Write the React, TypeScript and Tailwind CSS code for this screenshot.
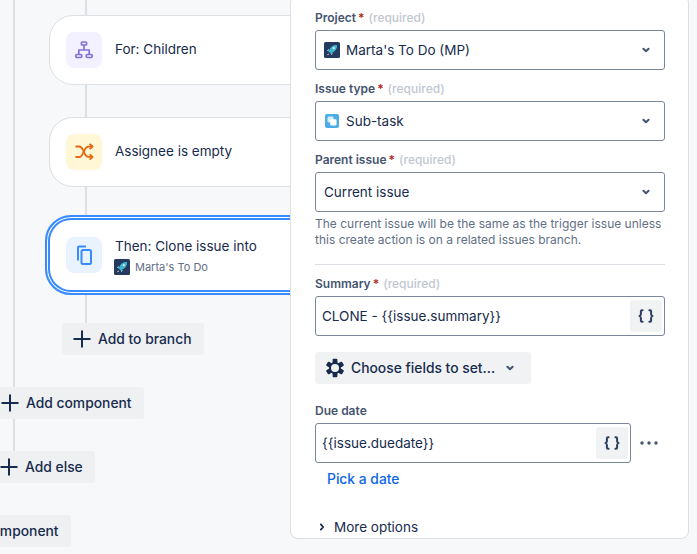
import React from 'react';

const RocketAvatar = ({ size }: { size: number }) => (
  <svg width={size} height={size} viewBox="0 0 16 16" className="shrink-0">
    <rect width="16" height="16" rx="1.5" fill="#243a5e" />
    <path d="M13 3c-3-.4-5.6 1-7 3.6L4.6 9.4l2 2 2.8-1.4C12 8.6 13.4 6 13 3z" fill="#3fb4d0" />
    <circle cx="9.8" cy="6.2" r="1.1" fill="#d9f3f9" />
    <path d="M4.6 9.2 2.8 8.8 5 6.8zM6.8 11.4l.4 1.8 2-2.2z" fill="#8fd8e8" />
    <path d="M4.4 11.6 2.8 13.2 5 12.6z" fill="#f4f5f7" />
  </svg>
);

const SubtaskIcon = () => (
  <svg width="14" height="14" viewBox="0 0 14 14" className="shrink-0">
    <rect width="14" height="14" rx="2" fill="#4bade8" />
    <rect x="2.5" y="2.5" width="6" height="6" rx="1.2" fill="#d6eefb" />
    <rect x="5.2" y="5.2" width="6.3" height="6.3" rx="1.2" fill="#ffffff" />
  </svg>
);

const Chevron = () => (
  <svg width="16" height="16" viewBox="0 0 16 16" fill="none" stroke="#44546f" strokeWidth="2" strokeLinecap="round" strokeLinejoin="round" className="shrink-0">
    <path d="M5.4 6.8 8 9.2l2.6-2.4" />
  </svg>
);

const Plus = () => (
  <svg width="24" height="24" viewBox="0 0 24 24" fill="none" stroke="#172b4d" strokeWidth="2" className="shrink-0">
    <path d="M12 3.5v17M3.5 12h17" />
  </svg>
);

const Gear = () => (
  <svg width="20" height="20" viewBox="0 0 20 20" className="shrink-0">
    <g fill="#172b4d">
      <rect x="7.6" y="0.8" width="4.8" height="18.4" rx="1" />
      <rect x="7.6" y="0.8" width="4.8" height="18.4" rx="1" transform="rotate(60 10 10)" />
      <rect x="7.6" y="0.8" width="4.8" height="18.4" rx="1" transform="rotate(120 10 10)" />
    </g>
    <circle cx="10" cy="10" r="6" fill="#172b4d" />
    <circle cx="10" cy="10" r="4" fill="#f1f2f4" />
  </svg>
);

const Braces = () => (
  <span className="w-8 h-8 shrink-0 rounded-[3px] bg-[#f1f2f4] flex items-center justify-center text-[#2c3e5d]">
    <svg width="16" height="14" viewBox="0 0 16 14" fill="none" stroke="#2c3e5d" strokeWidth="2" strokeLinecap="round" strokeLinejoin="round">
      <path d="M4.6 1.2H4c-.8 0-1.1.4-1.1 1.1v2.6c0 1-.5 1.6-1.4 2.1.9.5 1.4 1.1 1.4 2.1v2.6c0 .7.3 1.1 1.1 1.1h.6" />
      <path d="M11.4 1.2h.6c.8 0 1.1.4 1.1 1.1v2.6c0 1 .5 1.6 1.4 2.1-.9.5-1.4 1.1-1.4 2.1v2.6c0 .7-.3 1.1-1.1 1.1h-.6" />
    </svg>
  </span>
);

const Label = ({ text, required }: { text: string; required?: boolean }) => (
  <div className="h-4 mb-1 flex items-center text-xs leading-4 font-semibold text-[#44546f]">
    {text}
    {required && (
      <>
        <span className="text-[#ae2a19] ml-[2px]">*</span>
        <span className="text-[#c1c7d0] font-medium ml-[4px]">(required)</span>
      </>
    )}
  </div>
);

const SelectBox = ({ icon, text }: { icon?: React.ReactNode; text: string }) => (
  <div className="h-10 flex items-center gap-[6px] pl-2 pr-[10px] bg-white border border-[#7a869a] rounded-[3px] text-[13.5px] text-[#172b4d]">
    {icon}
    <span className="flex-1">{text}</span>
    <Chevron />
  </div>
);

const FlowCard = ({ bg, icon, title, children, selected }: { bg: string; icon: React.ReactNode; title: string; children?: React.ReactNode; selected?: boolean }) => (
  <div
    className={
      selected
        ? 'relative z-10 h-[80px] -ml-1 -mr-10 pl-[19px] flex items-center gap-[13px] bg-white rounded-[26px] border-[2px] border-[#388bff] shadow-[inset_0_0_0_1px_#ffffff,inset_0_0_0_3px_#388bff]'
        : 'relative z-10 h-[70px] -mr-10 pl-[16px] flex items-center gap-[13px] bg-white rounded-[24px] border border-[#dcdfe4]'
    }
  >
    <div className={`w-9 h-9 rounded-lg flex items-center justify-center shrink-0 ${bg}`}>{icon}</div>
    <div>
      <div className={`text-[13.5px] leading-5 text-[#172b4d] ${selected ? '' : '-mt-[3px]'}`}>{title}</div>
      {children}
    </div>
  </div>
);

const AddButton = ({ text, className }: { text: string; className: string }) => (
  <div className={`relative z-10 h-8 w-fit flex items-center gap-[4px] pl-2 pr-3 rounded-[3px] bg-[#eef0f2] text-[13.85px] font-medium text-[#172b4d] whitespace-nowrap ${className}`}>
    <Plus />
    {text}
  </div>
);

export default function App() {
  return (
    <div className="h-[554px] w-[697px] overflow-hidden flex bg-[#f7f8f9] font-['Inter',sans-serif]">
      {/* rule canvas */}
      <div className="relative w-[290px] shrink-0 overflow-hidden">
        <div className="absolute left-[13px] top-0 w-[2px] h-[455px] bg-[#dcdfe4]" />
        <div className="absolute left-[85px] top-0 w-[2px] h-[325px] bg-[#dcdfe4]" />
        <div className="pl-[49px] pt-[15px]">
          <FlowCard
            bg="bg-[#f3f0ff]"
            title="For: Children"
            icon={
              <svg width="20" height="20" viewBox="0 0 20 20" fill="none" stroke="#8270db" strokeWidth="1.7" strokeLinejoin="round">
                <rect x="7.4" y="2" width="5.2" height="3" rx="1" />
                <rect x="1.8" y="14.5" width="6" height="3" rx="1.2" />
                <rect x="12.2" y="14.5" width="6" height="3" rx="1.2" />
                <path d="M10 5v5M4.8 14.5V10h10.4v4.5" />
              </svg>
            }
          />
          <div className="h-8" />
          <FlowCard
            bg="bg-[#fff7d6]"
            title="Assignee is empty"
            icon={
              <svg width="20" height="20" viewBox="0 0 20 20" fill="none" stroke="#e56910" strokeWidth="1.8">
                <path d="M1.5 4.5h3.6c2.2 0 2.9 1.6 3.8 3.4l1.9 3.9c.8 1.6 1.6 3 3.6 3h3" />
                <path d="M1.5 15h3.6c2.2 0 2.9-1.6 3.8-3.4l1.9-3.9c.8-1.6 1.6-3.1 3.6-3.1h3" />
                <path d="M15.6 1.8l3 2.7-3 2.7M15.6 12.4l3 2.6-3 2.7" strokeLinejoin="round" />
              </svg>
            }
          />
          <div className="h-7" />
          <FlowCard
            selected
            bg="bg-[#e9f2ff]"
            title="Then: Clone issue into"
            icon={
              <svg width="20" height="22" viewBox="0 0 20 22" fill="none" stroke="#388bff" strokeWidth="2" strokeLinejoin="round">
                <path d="M4 16.5V3.5c0-.6.4-1 1-1h7" />
                <rect x="7.5" y="6" width="9.5" height="14" rx="1.5" />
              </svg>
            }
          >
            <div className="flex items-center gap-[5px] mt-[3px] -ml-px text-[11px] leading-4 text-[#626f86]">
              <RocketAvatar size={16} />
              Marta's To Do
            </div>
          </FlowCard>
        </div>
        <AddButton text="Add to branch" className="ml-[62px] mt-7" />
        <AddButton text="Add component" className="ml-[-10px] mt-8" />
        <AddButton text="Add else" className="ml-[-11px] mt-8" />
        <AddButton text="Add component" className="ml-[-83px] mt-8" />
      </div>

      {/* config panel */}
      <div className="w-[399px] h-[544px] -mt-[5px] shrink-0 bg-white border border-[#dcdfe4] rounded-lg pt-[14px] pl-6 pr-[23px]">
        <Label text="Project" required />
        <SelectBox icon={<RocketAvatar size={16} />} text="Marta's To Do (MP)" />
        <div className="h-[11px]" />
        <Label text="Issue type" required />
        <SelectBox icon={<span className="w-4 flex justify-center"><SubtaskIcon /></span>} text="Sub-task" />
        <div className="h-[11px]" />
        <Label text="Parent issue" required />
        <SelectBox text="Current issue" />
        <p className="mt-1 text-xs leading-4 text-[#626f86]">
          The current issue will be the same as the trigger issue unless this create action is on a related issues branch.
        </p>
        <div className="mt-4 mb-[11px] h-px bg-[#dcdfe4]" />
        <Label text="Summary" required />
        <div className="h-10 flex items-center justify-between pl-[6px] pr-[2px] bg-white border border-[#7a869a] rounded-[3px] text-[13.5px] text-[#172b4d]">
          <span>CLONE - {'{{issue.summary}}'}</span>
          <Braces />
        </div>
        <div className="mt-4 w-[216px] h-8 flex items-center gap-[6px] pl-[10px] rounded-[3px] bg-[#f1f2f4] text-[13.85px] font-medium text-[#172b4d]">
          <Gear />
          Choose fields to set...
          <span className="ml-[1px]"><Chevron /></span>
        </div>
        <div className="mt-[19px]">
          <Label text="Due date" />
        </div>
        <div className="flex items-center">
          <div className="w-[316px] h-10 flex items-center justify-between pl-[6px] pr-[2px] bg-white border border-[#7a869a] rounded-[3px] text-[13.5px] text-[#172b4d]">
            <span>{'{{issue.duedate}}'}</span>
            <Braces />
          </div>
          <svg width="20" height="6" viewBox="0 0 20 6" fill="#44546f" className="ml-2">
            <circle cx="3" cy="3" r="1.7" />
            <circle cx="10" cy="3" r="1.7" />
            <circle cx="17" cy="3" r="1.7" />
          </svg>
        </div>
        <div className="mt-[6px] ml-3 text-[13.85px] leading-5 font-medium text-[#0c66e4]">Pick a date</div>
        <div className="mt-7 flex items-center gap-[6px] pl-[1px] text-[13.5px] leading-5 text-[#172b4d]">
          <svg width="12" height="12" viewBox="0 0 12 12" fill="none" stroke="#172b4d" strokeWidth="1.8" strokeLinecap="round" strokeLinejoin="round">
            <path d="M4.8 3.4 7.2 6 4.8 8.6" />
          </svg>
          More options
        </div>
      </div>
    </div>
  );
}
